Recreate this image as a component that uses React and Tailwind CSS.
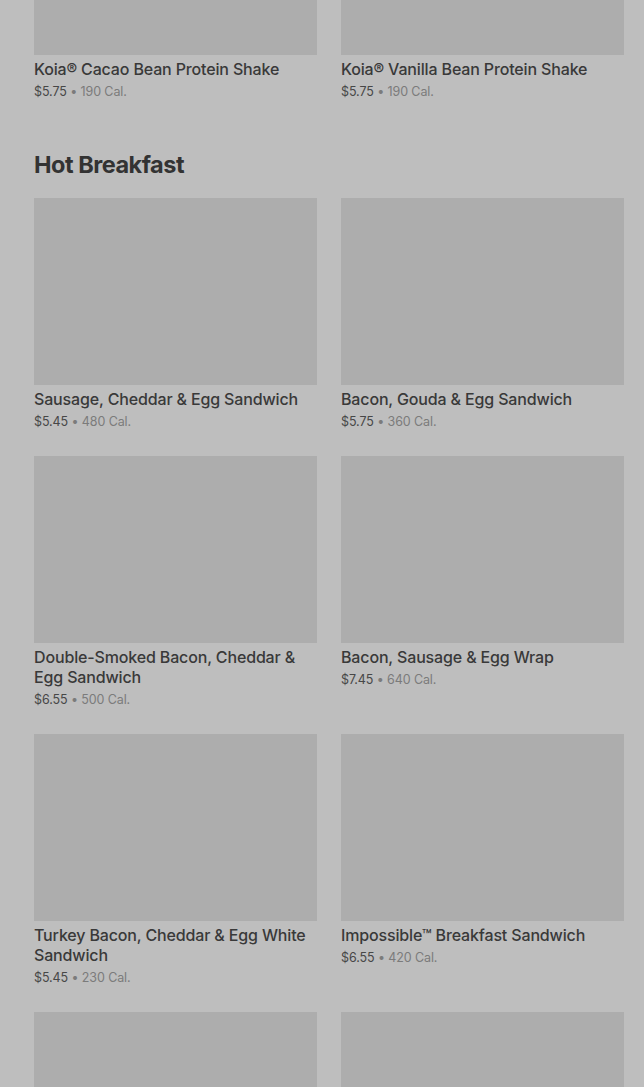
const TOP = [
  { name: "Koia® Cacao Bean Protein Shake", price: "$5.75", cal: "190 Cal." },
  { name: "Koia® Vanilla Bean Protein Shake", price: "$5.75", cal: "190 Cal." },
];

const HOT_BREAKFAST = [
  { name: "Sausage, Cheddar & Egg Sandwich", price: "$5.45", cal: "480 Cal." },
  { name: "Bacon, Gouda & Egg Sandwich", price: "$5.75", cal: "360 Cal." },
  { name: "Double-Smoked Bacon, Cheddar & Egg Sandwich", price: "$6.55", cal: "500 Cal." },
  { name: "Bacon, Sausage & Egg Wrap", price: "$7.45", cal: "640 Cal." },
  { name: "Turkey Bacon, Cheddar & Egg White Sandwich", price: "$5.45", cal: "230 Cal." },
  { name: "Impossible™ Breakfast Sandwich", price: "$6.55", cal: "420 Cal." },
  { name: "", price: "", cal: "" },
  { name: "", price: "", cal: "" },
];

function ItemCard({ item }) {
  return (
    <div className="flex flex-col">
      <div className="h-[187px] w-full bg-[#adadad]" />
      {item.name && (
        <>
          <p className="mt-1 text-[16px] leading-5 font-medium tracking-[-0.15px] text-[#393939]">
            {item.name}
          </p>
          <p className="mt-[3px] mb-[-1px] text-[12.5px] leading-5 tracking-[-0.1px] text-[#474747]">
            {item.price}
            <span className="text-[#7b7b7b]"> • {item.cal}</span>
          </p>
        </>
      )}
    </div>
  );
}

export default function App() {
  return (
    <div
      className="w-[644px] h-[1087px] overflow-hidden bg-[#bebebe] pl-[34px] pr-5"
      style={{ fontFamily: "Inter, 'Liberation Sans', sans-serif" }}
    >
      {/* tail of the previous section */}
      <div className="-mt-[132px] grid grid-cols-2 gap-x-6">
        {TOP.map((it) => (
          <ItemCard key={it.name} item={it} />
        ))}
      </div>

      <h2 className="mt-12 mb-[17px] text-[23.5px] leading-8 font-bold text-[#333] tracking-[-0.5px]">
        Hot Breakfast
      </h2>

      <div className="grid grid-cols-2 gap-x-6 gap-y-[25px]">
        {HOT_BREAKFAST.map((it, i) => (
          <ItemCard key={i} item={it} />
        ))}
      </div>
    </div>
  );
}
